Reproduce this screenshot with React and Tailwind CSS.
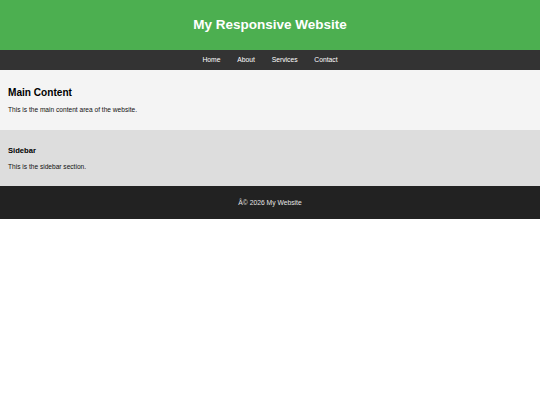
export default function App() {
  const font = { fontFamily: '"Liberation Sans", Arial, sans-serif' };
  return (
    <div className="w-[540px] bg-white" style={font}>
      <header className="h-[50px] bg-[#4caf50] flex items-center justify-center pb-[1px]">
        <h1 className="text-[13.5px] leading-[16px] font-bold text-white">My Responsive Website</h1>
      </header>
      <nav className="h-[20px] bg-[#333333] flex items-center justify-center gap-[16.8px] pb-[1px]">
        <a className="text-[6.75px] leading-[8px] text-white">Home</a>
        <a className="text-[6.75px] leading-[8px] text-white">About</a>
        <a className="text-[6.75px] leading-[8px] text-white">Services</a>
        <a className="text-[6.75px] leading-[8px] text-white">Contact</a>
      </nav>
      <main className="bg-[#f4f4f4] px-[8px] pt-[16.5px] pb-[16px]">
        <h2 className="text-[10.1px] leading-[12px] font-bold text-black mb-[7.8px]">Main Content</h2>
        <p className="text-[6.6px] leading-[8px] text-[#111]">This is the main content area of the website.</p>
      </main>
      <aside className="bg-[#dddddd] px-[8px] pt-[15.5px] pb-[15.2px]">
        <h3 className="text-[7.6px] leading-[9px] font-bold text-black mb-[8.3px]">Sidebar</h3>
        <p className="text-[6.6px] leading-[8px] text-[#111]">This is the sidebar section.</p>
      </aside>
      <footer className="h-[33px] bg-[#222222] flex items-center justify-center">
        <p className="text-[6.75px] leading-[8px] text-[#e5e5e5]">Â© 2026 My Website</p>
      </footer>
    </div>
  );
}
